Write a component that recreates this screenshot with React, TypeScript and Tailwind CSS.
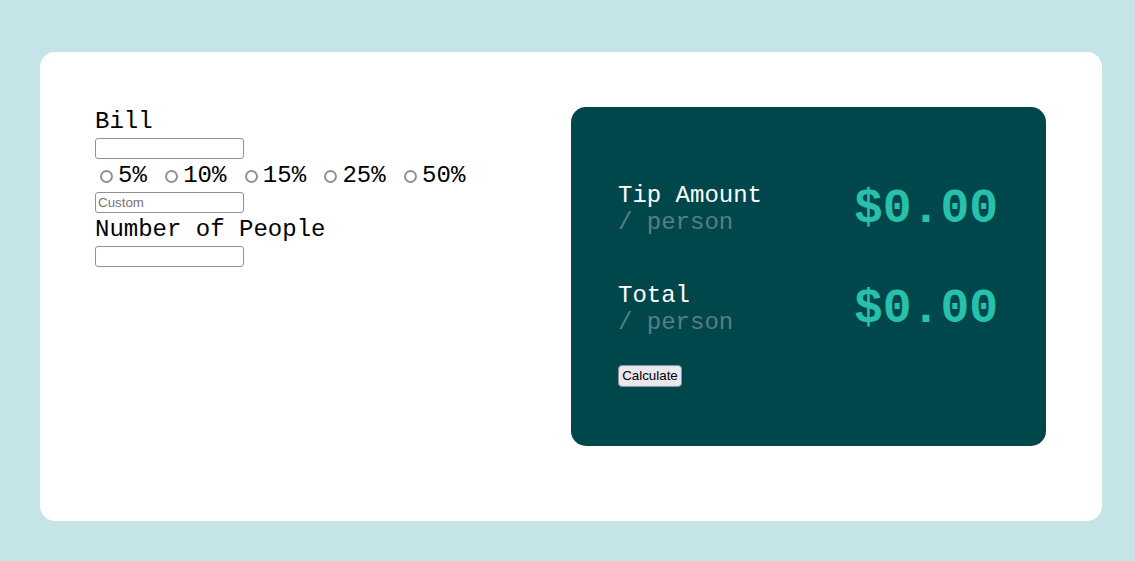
const mono = { fontFamily: '"Liberation Mono", "Courier New", monospace' };

const TIPS = ["5%", "10%", "15%", "25%", "50%"];

const Field = ({ placeholder }: { placeholder?: string }) => (
  <input
    type="text"
    placeholder={placeholder}
    className="block h-[21px] w-[149px] rounded-[3px] border border-[#8f8f9d] bg-white px-[2px] font-['Liberation_Sans',Arial,sans-serif] text-[13.33px] text-black placeholder:text-[#757575] outline-none"
  />
);

const ResultRow = ({ label, className }: { label: string; className?: string }) => (
  <div className={`flex h-[54px] items-start justify-between ${className ?? ""}`}>
    <div className="text-[24px] leading-[27px]" style={mono}>
      <p className="text-white">{label}</p>
      <p className="text-[#587e80]">/ person</p>
    </div>
    <p className="text-[48px] font-bold leading-[54px] text-[#26c0ab]" style={mono}>
      $0.00
    </p>
  </div>
);

export default function App() {
  return (
    <div className="h-[561px] w-full bg-[#c5e4e7] pl-[40px] pt-[52px]">
      <div className="flex h-[469px] w-[1062px] items-start justify-between rounded-[15px] bg-white py-[55px] pl-[55px] pr-[56px]">
        <form className="-mt-[2px] text-[24px] text-black" style={mono}>
          <label className="block h-[33px] leading-[33px]">Bill</label>
          <Field />
          <div className="h-[33px] pl-[1px] leading-[33px]">
            {TIPS.map((t) => (
              <span key={t}>
                <input
                  type="radio"
                  name="tip"
                  className="ml-[4px] mr-[5px] inline-block h-[13px] w-[13px] appearance-none rounded-full border-2 border-[#8f8f9d] bg-white align-[-1px]"
                />
                <label>{t}</label>{" "}
              </span>
            ))}
          </div>
          <Field placeholder="Custom" />
          <label className="block h-[33px] leading-[33px]">Number of People</label>
          <Field />
        </form>

        <div className="h-[339px] w-[475px] rounded-[15px] bg-[#00474b] pl-[47px] pr-[48px] pt-[75px]">
          <ResultRow label="Tip Amount" />
          <ResultRow label="Total" className="mt-[46px]" />
          <button
            type="button"
            className="mt-[29px] h-[22px] w-[64px] rounded-[4px] border border-[#8f8f9d] bg-[#e9e9ed] font-['Liberation_Sans',Arial,sans-serif] text-[13.33px] text-black"
          >
            Calculate
          </button>
        </div>
      </div>
    </div>
  );
}
